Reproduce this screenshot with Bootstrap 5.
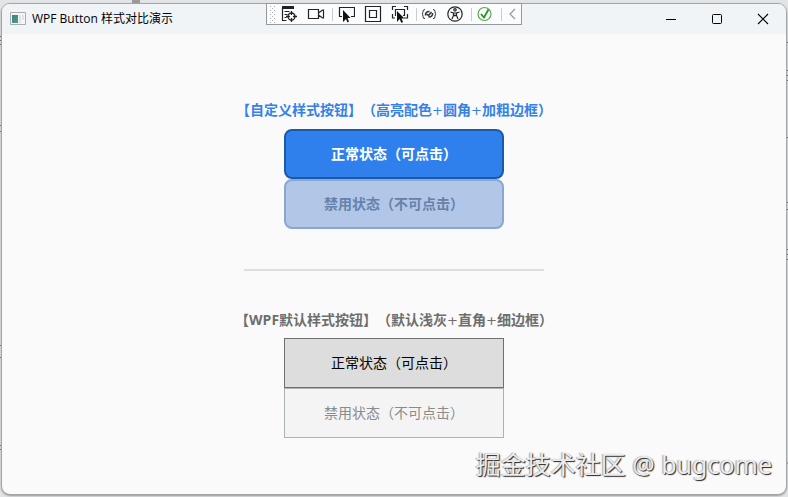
<!DOCTYPE html>
<html lang="zh-CN">
<head>
<meta charset="utf-8">
<meta name="viewport" content="width=device-width, initial-scale=1">
<title>WPF Button 样式对比演示</title>
<link href="https://cdn.jsdelivr.net/npm/bootstrap@5.3.0/dist/css/bootstrap.min.css" rel="stylesheet">
<style>
body{font-family:"Open Sans","Noto Sans CJK SC",sans-serif;background:#e3e4e5;text-spacing-trim:space-all;padding:3px 1px 2px}
.desk-marks{top:0;left:0;width:100%;height:100%;pointer-events:none}
.app-window{background:#fafafa;border:1px solid #a3a6a8;border-radius:9px;box-shadow:0 1px 2px #999}
.title-strip{height:30px;background:#f0f4f7;padding-left:8px;font-size:12px;color:#000}
.title-text{margin-left:6px}
.win-btn{width:46px;height:30px;background:none;border:0;padding:0}
.debug-bar{top:-1px;left:50%;width:256px;height:22px;margin-left:-128px;background:#fbfcfd;border:1px solid #96999c}
.debug-bar button{border:0;background:none;padding:0;display:block;width:100%;height:100%}
.debug-grid{display:grid;grid-template-columns:10px 24px 30px 24px 36px 18px 36px 20px 36px 18px;height:20px}
.debug-bar svg,.win-btn svg{display:block;margin:auto}
.stage{padding-top:66px;padding-bottom:56px}
.caption-line{font-size:14px;line-height:20px;font-weight:700;margin:0 0 9px}
.caption-blue{color:#3582e6}
.caption-gray{color:#6e6e6e;margin-bottom:8px}
.plus{font:400 13px/1 "DejaVu Sans",sans-serif}
.demo-btn{width:220px;height:50px;font-size:14px;line-height:20px;padding:0}
.btn-custom{font-weight:700;color:#fff;background:#2f80ed;border:2px solid #1c5aa8;border-radius:8px}
.btn-custom:hover{color:#fff;background:#2f80ed;border-color:#1c5aa8}
.btn-custom:disabled{opacity:1;color:#6682aa;background:#b2c7e8;border-color:#8ca5d2}
.btn-plain{color:#000;background:#ddd;border:1px solid #707070;border-radius:0}
.btn-plain:hover{color:#000;background:#ddd;border-color:#707070}
.btn-plain:disabled{opacity:1;color:#8b8b8b;background:#f4f4f4;border-color:#adb2b5}
.rule{width:300px;height:2px;border:0;background:#ddd;opacity:1;margin:40px 0 39px}
.watermark{right:14px;bottom:13px;font-family:"Noto Sans","Noto Sans CJK SC",sans-serif;font-size:25px;line-height:34px;color:#ececec;text-shadow:1px 1px 1px #222,-1px 0 1px #aaa}
</style>
<script src="https://cdn.jsdelivr.net/npm/bootstrap@5.3.0/dist/js/bootstrap.bundle.min.js"></script>
</head>
<body class="min-vh-100 d-flex position-relative">
<svg class="desk-marks position-absolute" aria-hidden="true"><path fill="#999" d="M132 0h8v3h-8z"/><path stroke="#666" d="M0 36.500h2M0 40.500h2M0 44.500h2M0 125.500h2M0 131.500h2M0 345.500h2M0 357.500h2M0 445.500h2M0 449.500h2"/><svg x="100%" overflow="visible"><path stroke="#555" d="M-1 42.500h1M-1 70.500h1M-1 75.500h1M-1 80.500h1M-1 137.500h1M-1 202.500h1M-1 209.500h1M-1 249.500h1M-1 254.500h1M-1 259.500h1"/><path stroke="#a04055" d="M-1 463h1"/></svg></svg>
<main class="app-window position-relative flex-fill d-flex flex-column overflow-visible">
  <header class="title-strip d-flex align-items-center rounded-top-3">
    <svg width="16" height="14" viewBox="0 0 16 14" aria-hidden="true"><defs><linearGradient id="appfill" x2="0.600" y2="1"><stop stop-color="#3d7c8c"/><stop offset="1" stop-color="#4c9c78"/></linearGradient></defs><path fill="#f4f6f7" stroke="#a9adb1" d="M.5.5h15v12H.5z"/><path fill="url(#appfill)" d="M2 3h6v8H2z"/><path fill="#dfe2e5" d="M9 3h2v8H9zM12 3h2v5h-2z"/></svg>
    <span class="title-text me-auto">WPF Button 样式对比演示</span>
    <button class="win-btn" aria-label="最小化"><svg width="12" height="12"><path stroke="#000" d="M1 6.500h10"/></svg></button>
    <button class="win-btn" aria-label="最大化"><svg width="12" height="12" fill="none"><rect x="1.500" y="1.500" width="9" height="9" rx="1" stroke="#000"/></svg></button>
    <button class="win-btn" aria-label="关闭"><svg width="12" height="12"><path stroke="#000" stroke-width="1.100" d="M1 1l10 10M11 1L1 11"/></svg></button>
  </header>
  <div class="debug-bar position-absolute" role="toolbar" aria-label="调试工具">
    <div class="debug-grid">
      <svg width="8" height="20" aria-hidden="true"><defs><pattern id="grip" width="4" height="4" patternUnits="userSpaceOnUse"><path fill="#aaa" d="M0 0h1v1H0zM2 2h1v1H2z"/></pattern></defs><path fill="url(#grip)" d="M2 1h6v18H2z"/></svg>
      <button aria-label="实时可视化树"><svg width="18" height="18" fill="none" stroke="#222"><path fill="#222" stroke="none" d="M2 1h12v3H2z"/><path stroke-width="1.200" d="M2.500 3v12.500h4M4.500 6.500h5M4.500 9.500h3M4.500 12.500h2"/><circle cx="11.500" cy="11.500" r="3.500" stroke-width="1.300"/><path stroke-width="1.300" d="M11.500 6v4M11.500 13v4M6 11.500h4M13 11.500h4"/></svg></button>
      <button aria-label="录制"><svg width="18" height="18" fill="none" stroke="#222" stroke-width="1.200"><path d="M1.500 4.500h10v9h-10zM11.500 8l4-3h1v8h-1l-4-3"/></svg></button>
      <button aria-label="选择元素"><svg width="24" height="18"><path stroke="#ccc" d="M1.500 3v13"/><path fill="none" stroke="#222" stroke-width="1.200" d="M11 11.500H8.500v-9h15v9H20"/><path fill="#111" d="M12 5v12l3-3 1.500 3.500 1.500-1-1.500-3.500h3z"/></svg></button>
      <button aria-label="显示布局"><svg width="18" height="18" fill="none" stroke="#222" stroke-width="1.200"><path d="M1.500 1.500h15v15h-15zM5.500 5.500h7v7h-7z"/></svg></button>
      <button aria-label="跟踪焦点"><svg width="18" height="18" fill="none" stroke="#222" stroke-width="1.200"><path d="M1.500 5V1.500H5M13 1.500h3.500V5M16.500 9v4H13M1.500 9v4H4M5 10.500h-.5v-6h9v6H12"/><path fill="#111" stroke="none" d="M6 6v11l2.500-3 2 4 1.500-1-1.500-3.500h3z"/></svg></button>
      <button aria-label="热重载选项"><svg width="26" height="18" fill="none" stroke="#333"><path stroke="#ccc" d="M2.500 3v13"/><path d="M11 4.500q-2 0-2 2T8 9q1 0 1 2.500t2 2M19 4.500q2 0 2 2T22 9q-1 0-1 2.500t-2 2"/><path stroke-width="1.500" d="M11.500 10.500q-.5-4 4-4M18.500 8q.5 4-4 4M12.500 9l2 1.500 3-3.500"/></svg></button>
      <button aria-label="辅助功能"><svg width="18" height="18" fill="none" stroke="#222" stroke-width="1.200"><circle cx="9" cy="9" r="7.200"/><circle cx="9" cy="4.800" r="1.200"/><path d="M4.500 7l3 1v2.500L6 14M13.500 7l-3 1v2.500L12 14M7.500 8h3M8 11l1-1 1 1"/></svg></button>
      <button aria-label="热重载可用"><svg width="28" height="18" fill="none"><path stroke="#ccc" d="M2.500 3v13"/><circle cx="15.500" cy="9" r="6.500" stroke="#55aa50" stroke-width="1.200"/><path stroke="#22941f" stroke-width="1.800" d="M12 9l3 3.500 4.500-8"/></svg></button>
      <button aria-label="收起"><svg width="18" height="18" fill="none"><path stroke="#ccc" d="M.5 3v13"/><path stroke="#999" stroke-width="1.200" d="M14 4L9 9l5 5"/></svg></button>
    </div>
  </div>
  <section class="stage flex-fill d-flex flex-column align-items-center">
    <h2 class="caption-line caption-blue">【自定义样式按钮】（高亮配色<span class="plus">+</span>圆角<span class="plus">+</span>加粗边框）</h2>
    <button type="button" class="btn demo-btn btn-custom">正常状态（可点击）</button>
    <button type="button" class="btn demo-btn btn-custom" disabled>禁用状态（不可点击）</button>
    <hr class="rule">
    <h2 class="caption-line caption-gray">【WPF默认样式按钮】（默认浅灰<span class="plus">+</span>直角<span class="plus">+</span>细边框）</h2>
    <button type="button" class="btn demo-btn btn-plain">正常状态（可点击）</button>
    <button type="button" class="btn demo-btn btn-plain" disabled>禁用状态（不可点击）</button>
  </section>
  <div class="watermark position-absolute">掘金技术社区 @ bugcome</div>
</main>
</body>
</html>
